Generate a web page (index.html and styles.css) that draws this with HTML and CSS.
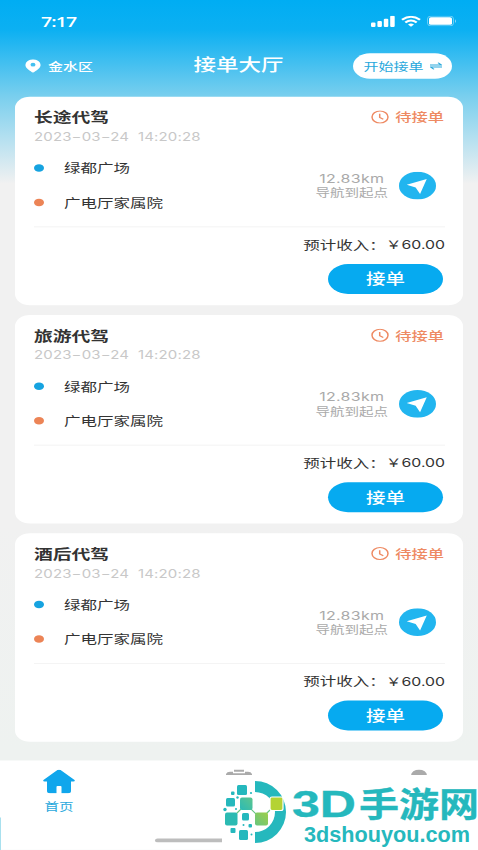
FILE: index.html
```html
<!DOCTYPE html>
<html lang="zh-CN">
<head>
<meta charset="utf-8">
<title>接单大厅</title>
<link rel="stylesheet" href="styles.css">
</head>
<body>
<div class="viewport">
<div class="screen">
  <header class="header">
    <div class="status">
      <span class="clock">7:17</span>
      <span class="signals">
        <svg width="24" height="15" viewBox="0 0 24 15" fill="#fff"><rect x="0" y="9" width="4.5" height="6" rx="1.2"/><rect x="6.4" y="7" width="4.5" height="8" rx="1.2"/><rect x="12.8" y="4" width="4.5" height="11" rx="1.2"/><rect x="19.2" y="0" width="4.5" height="15" rx="1.2"/></svg>
        <svg width="20" height="15" viewBox="0 0 20 15" fill="none" stroke="#fff" stroke-width="2.5"><path d="M1 5.3Q10-2.6 19 5.3"/><path d="M4.3 8.9Q10 4 15.7 8.9"/><path d="M7 11.5Q10 9 13 11.5L10 14.8z" fill="#fff" stroke="none"/></svg>
        <svg width="30" height="14" viewBox="0 0 30 14"><rect x=".5" y=".5" width="26" height="13" rx="3.5" fill="none" stroke="#fff" stroke-opacity=".45"/><rect x="2" y="2" width="23" height="10" rx="2" fill="#fff"/><path d="M28 4.5q2 2.5 0 5z" fill="#fff" opacity=".55"/></svg>
      </span>
    </div>
    <div class="titlebar">
      <div class="location">
        <svg width="16" height="18" viewBox="0 0 16 18"><path fill="#fff" fill-rule="evenodd" d="M8 0a7.6 7.6 0 0 1 7.6 7.5C15.600 12 10.500 15.500 8 18 5.500 15.500.4 12 .4 7.500A7.600 7.600 0 0 1 8 0zm0 4.800a2.500 2.500 0 1 0 0 5 2.500 2.500 0 0 0 0-5z"/></svg>
        <span>金水区</span>
      </div>
      <h1>接单大厅</h1>
      <button class="toggle">开始接单
        <svg width="12" height="10" viewBox="0 0 12 10" fill="none" stroke="#28a8dc" stroke-width="1.3"><path d="M0 3.700h11.300L8 .5M12 6.300H.7L4 9.500"/></svg>
      </button>
    </div>
  </header>

  <main class="orders">
    <article class="card">
      <div class="top"><h2>长途代驾</h2><span class="state"><svg class="clockicon" viewBox="0 0 18 18"><circle cx="9" cy="9" r="8"/><path d="M8.700 4.500v5l3.600 2.500"/></svg>待接单</span></div>
      <time>2023−03−24&nbsp; 14:20:28</time>
      <div class="route">
        <ul><li class="from">绿都广场</li><li class="to">广电厅家属院</li></ul>
        <div class="distance"><b>12.83km</b><span>导航到起点</span></div>
        <svg class="nav" viewBox="0 0 36 36"><circle cx="18" cy="18" r="18"/><path d="M27 9.500 20.500 29l-4.300-8.700-8.700-3.500z"/></svg>
      </div>
      <p class="income"><span>预计收入：</span><b>￥60.00</b></p>
      <button class="accept">接单</button>
    </article>
    <article class="card">
      <div class="top"><h2>旅游代驾</h2><span class="state"><svg class="clockicon" viewBox="0 0 18 18"><circle cx="9" cy="9" r="8"/><path d="M8.700 4.500v5l3.600 2.500"/></svg>待接单</span></div>
      <time>2023−03−24&nbsp; 14:20:28</time>
      <div class="route">
        <ul><li class="from">绿都广场</li><li class="to">广电厅家属院</li></ul>
        <div class="distance"><b>12.83km</b><span>导航到起点</span></div>
        <svg class="nav" viewBox="0 0 36 36"><circle cx="18" cy="18" r="18"/><path d="M27 9.500 20.500 29l-4.300-8.700-8.700-3.500z"/></svg>
      </div>
      <p class="income"><span>预计收入：</span><b>￥60.00</b></p>
      <button class="accept">接单</button>
    </article>
    <article class="card">
      <div class="top"><h2>酒后代驾</h2><span class="state"><svg class="clockicon" viewBox="0 0 18 18"><circle cx="9" cy="9" r="8"/><path d="M8.700 4.500v5l3.600 2.500"/></svg>待接单</span></div>
      <time>2023−03−24&nbsp; 14:20:28</time>
      <div class="route">
        <ul><li class="from">绿都广场</li><li class="to">广电厅家属院</li></ul>
        <div class="distance"><b>12.83km</b><span>导航到起点</span></div>
        <svg class="nav" viewBox="0 0 36 36"><circle cx="18" cy="18" r="18"/><path d="M27 9.500 20.500 29l-4.300-8.700-8.700-3.500z"/></svg>
      </div>
      <p class="income"><span>预计收入：</span><b>￥60.00</b></p>
      <button class="accept">接单</button>
    </article>
  </main>

  <nav class="tabs">
    <div class="tab">
      <svg width="32" height="32" viewBox="0 0 32 32"><path fill="#10a6ec" d="M14.400.8q1.600-1.200 3.200 0L31.200 13.500q1.600 2-.8 2.500H28v12.500q0 3-3 3h-6.500V23q0-1-1-1h-3q-1 0-1 1v8.500H7q-3 0-3-3V16H1.600Q-.8 15.500.8 13.500z"/></svg>
      <span>首页</span>
    </div>
    <div class="tab"><svg class="board" width="28" height="30" viewBox="0 0 28 30" fill="#aaa"><path d="M9 0h10v3H9zM1 6q1-3 4-3h3v2h12V3h3q3 0 4 3v20q0 3-3 3H4q-3 0-3-3z"/></svg></div>
    <div class="tab"><svg class="person" width="28" height="30" viewBox="0 0 28 30" fill="#aaa"><circle cx="14" cy="8" r="8"/><path d="M1 30q0-12 13-12t13 12z"/></svg></div>
  </nav>
  <i class="homebar"></i>
  <i class="edge"></i>
</div>

<div class="watermark">
  <svg width="256" height="75" viewBox="222 775 256 75">
    <defs>
      <linearGradient id="g1" x1="0" y1="1" x2="1" y2="0"><stop offset="0" stop-color="#2bbab6"/><stop offset="1" stop-color="#5dc58d"/></linearGradient>
      <linearGradient id="g2" x1="0" y1="1" x2="1" y2="0"><stop offset="0" stop-color="#66c57f"/><stop offset="1" stop-color="#9dce48"/></linearGradient>
    </defs>
    <g fill="#25b8bd">
      <path d="M255 781a31 31 0 0 1 0 62V832a20 20 0 0 0 0-40z"/>
      <rect x="237" y="785" width="10" height="10" rx="1.500"/>
      <rect x="226" y="798" width="9" height="8.500" rx="1.500"/>
      <rect x="242" y="813" width="7" height="7.500" rx="1.500"/>
      <rect x="239" y="830" width="9" height="10" rx="1.500"/>
      <rect x="231" y="791.500" width="3.500" height="3.500" rx="1"/>
      <rect x="230.500" y="828" width="5" height="5" rx="1"/>
      <rect x="248.500" y="824" width="3.500" height="3.500" rx="1"/>
      <circle cx="225" cy="809.500" r="1.700"/><circle cx="251" cy="793" r="1.100"/><circle cx="237.500" cy="797.500" r="1.200"/><circle cx="236" cy="809" r="1"/><circle cx="243.500" cy="825" r="1"/><circle cx="251.500" cy="834.500" r="1"/>
    </g>
    <path d="M231 819 246 804 261 819 276 804" fill="none" stroke="#66c57f" stroke-width="1.200"/>
    <rect x="225" y="812.500" width="12.500" height="13" rx="2" fill="#2bbab2"/>
    <rect x="240" y="797.500" width="12.500" height="12.500" rx="2" fill="url(#g1)"/>
    <rect x="255" y="812.500" width="13" height="13" rx="2" fill="url(#g2)"/>
    <rect x="270" y="797" width="13" height="13.500" rx="2" fill="#b4d334" stroke="#fff" stroke-width="1.200"/>
    <text class="brand latin" x="292" y="817" textLength="64" lengthAdjust="spacingAndGlyphs">3D</text>
    <text class="brand" x="359" y="816.500" textLength="120" lengthAdjust="spacingAndGlyphs">手游网</text>
    <text class="domain" x="304" y="842" textLength="166" lengthAdjust="spacingAndGlyphs">3dshouyou.com</text>
  </svg>
</div>
</div>
</body>
</html>
```
FILE: styles.css
```css
* { box-sizing: border-box; }
body, h1, h2, p, ul { margin: 0; padding: 0; }
body { overflow: hidden; }
.viewport { position: relative; width: 478px; height: 850px; overflow: hidden; }
/* The screen is laid out at 478x1133 and squeezed vertically to 850. */
.screen {
  position: relative;
  width: 478px;
  height: 1133.33px;
  transform: scaleY(.75);
  transform-origin: 0 0;
  display: flex;
  flex-direction: column;
  background: linear-gradient(#00adf3 0, #0cb0f2 40px, #7acfee 129px, #b5e0f0 185px, #f1f1f1 245px, #f1f1f1 700px, #eef2f0 1000px);
  font-family: "Noto Sans", "Noto Sans CJK SC", sans-serif;
  color: #333;
}
button { border: 0; padding: 0; font-family: inherit; }
svg { display: block; flex: none; }

.header { height: 129px; flex: none; color: #fff; }
.status { height: 56px; display: flex; align-items: center; justify-content: space-between; padding: 0 21px 0 41px; }
.clock { font: 600 19.500px "Open Sans", sans-serif; letter-spacing: -.9px; }
.signals { display: flex; align-items: center; gap: 6px; }
.titlebar { height: 64px; display: grid; grid-template-columns: 1fr 100px 1fr; align-items: center; padding: 0 26px 0 25px; }
.location { display: flex; align-items: center; gap: 7px; font-size: 15px; font-weight: 500; }
h1 { font-size: 22.500px; line-height: 30px; font-weight: 500; white-space: nowrap; text-align: center; position: relative; top: -1px; }
.toggle { justify-self: end; width: 99px; height: 34px; border-radius: 17px; background: #fff; color: #28a8dc; font-size: 15px; display: flex; align-items: center; justify-content: center; gap: 6px; white-space: nowrap; }

.orders { display: flex; flex-direction: column; gap: 13px; padding: 0 15px; flex: 1; }
.card { height: 278px; background: #fff; border-radius: 15px; padding: 13px 18px 0 19px; display: flex; flex-direction: column; }
.top { height: 28px; display: flex; align-items: center; justify-content: space-between; }
h2 { font-size: 18.800px; line-height: 28px; font-weight: 700; }
.state { display: flex; align-items: center; gap: 6px; color: #ee8a63; font-size: 16.300px; font-weight: 500; margin-right: 1px; }
.clockicon { width: 18px; height: 18px; fill: none; stroke: #ee8a63; stroke-width: 1.500; }
time { height: 24px; line-height: 26px; font-family: Inter, sans-serif; font-size: 15px; color: #c8c8c8; white-space: nowrap; letter-spacing: .15px; }
.route { height: 109px; padding-top: 7px; display: flex; align-items: center; border-bottom: 1px solid #f0f0f0; }
.route ul { list-style: none; flex: 1; align-self: flex-start; }
.route li { height: 46px; display: flex; align-items: center; font-size: 16.500px; gap: 20px; }
.route li::before { content: ""; width: 10px; height: 10px; border-radius: 50%; background: #16a3e0; }
.route .to::before { background: #ec8456; }
.distance { display: flex; flex-direction: column; align-items: center; color: #aaa; font-size: 14.500px; line-height: 19px; margin: 0 11px 8px 0; }
.distance b { font: 400 16px/19px Inter, sans-serif; letter-spacing: .3px; }
.nav { width: 37px; height: 37px; margin: 0 9px 8px 0; }
.nav circle { fill: #21b5ef; }
.nav path { fill: #fff; }
.income { height: 45px; display: flex; align-items: center; justify-content: flex-end; font-size: 16.500px; }
.income b { font: 400 15.800px Inter, "Noto Sans CJK SC", sans-serif; }
.accept { align-self: flex-end; width: 115px; height: 40px; margin-right: 2px; margin-top: 4px; border-radius: 20px; background: #06aaf0; color: #fff; font-size: 19.500px; line-height: 38px; font-weight: 500; }

.tabs { height: 119.33px; flex: none; background: #fff; display: grid; grid-template-columns: 118px 242px 118px; }
.tab { display: flex; flex-direction: column; align-items: center; padding-top: 12px; color: #28a8dc; font-size: 14.500px; }
.tab span { line-height: 28px; margin-top: 3px; }
.homebar { position: absolute; left: 155px; top: 1117.500px; width: 168px; height: 5px; border-radius: 3px; background: #bdbdbd; }
.edge { position: absolute; left: 0; top: 1090px; width: 1px; height: 44px; background: #a8e0ee; }

.watermark { position: absolute; left: 222px; top: 775px; background: #fff; }
.brand { font: 700 34px "Noto Sans CJK SC", sans-serif; fill: #25b8bd; stroke: #25b8bd; stroke-width: .3; }
.latin { font: 700 36px "Liberation Sans", sans-serif; }
.domain { font: 700 22.500px "Liberation Sans", sans-serif; fill: #25b8bd; }
```
